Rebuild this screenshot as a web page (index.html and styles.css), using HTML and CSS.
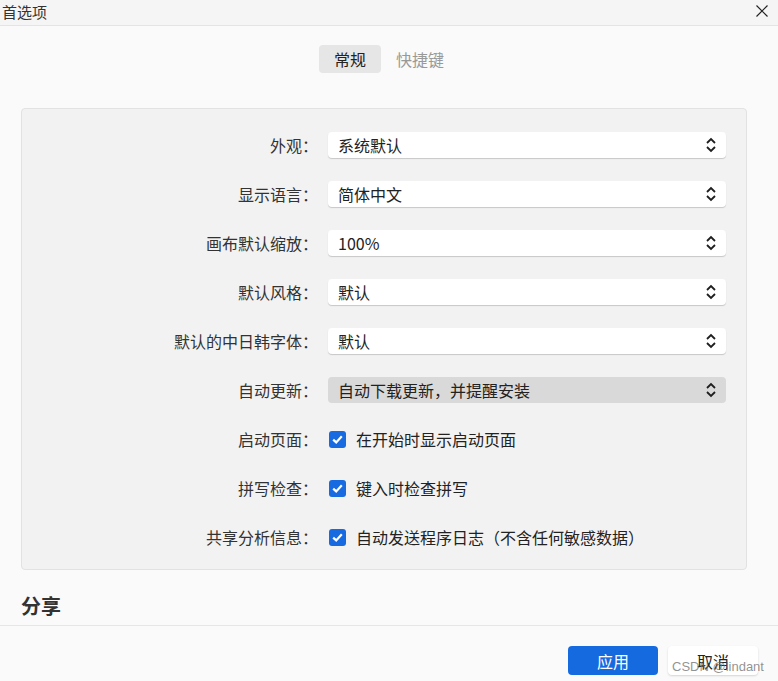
FILE: index.html
```html
<!DOCTYPE html>
<html lang="zh-CN">
<head>
<meta charset="utf-8">
<title>首选项</title>
<link rel="stylesheet" href="styles.css">
</head>
<body>
<div class="window">
  <header class="titlebar">
    <span class="title">首选项</span>
    <button class="close" aria-label="关闭">
      <svg width="12" height="12" viewBox="0 0 12 12"><path d="M0.5 0.5 L11.5 11.5 M11.5 0.5 L0.5 11.5" stroke="#222" stroke-width="1.2" fill="none"/></svg>
    </button>
  </header>

  <main class="content">
    <nav class="tabs">
      <span class="tab active">常规</span>
      <span class="tab">快捷键</span>
    </nav>

    <section class="panel">
      <div class="row">
        <label class="label">外观：</label>
        <div class="select"><span>系统默认</span><svg class="chev" width="10" height="18" viewBox="0 0 10 18"><path d="M1 7 L5 3 L9 7 M1 11 L5 15 L9 11" stroke="#1e1e1e" stroke-width="1.8" fill="none"/></svg></div>
      </div>
      <div class="row">
        <label class="label">显示语言：</label>
        <div class="select"><span>简体中文</span><svg class="chev" width="10" height="18" viewBox="0 0 10 18"><path d="M1 7 L5 3 L9 7 M1 11 L5 15 L9 11" stroke="#1e1e1e" stroke-width="1.8" fill="none"/></svg></div>
      </div>
      <div class="row">
        <label class="label">画布默认缩放：</label>
        <div class="select"><span>100%</span><svg class="chev" width="10" height="18" viewBox="0 0 10 18"><path d="M1 7 L5 3 L9 7 M1 11 L5 15 L9 11" stroke="#1e1e1e" stroke-width="1.8" fill="none"/></svg></div>
      </div>
      <div class="row">
        <label class="label">默认风格：</label>
        <div class="select"><span>默认</span><svg class="chev" width="10" height="18" viewBox="0 0 10 18"><path d="M1 7 L5 3 L9 7 M1 11 L5 15 L9 11" stroke="#1e1e1e" stroke-width="1.8" fill="none"/></svg></div>
      </div>
      <div class="row">
        <label class="label">默认的中日韩字体：</label>
        <div class="select"><span>默认</span><svg class="chev" width="10" height="18" viewBox="0 0 10 18"><path d="M1 7 L5 3 L9 7 M1 11 L5 15 L9 11" stroke="#1e1e1e" stroke-width="1.8" fill="none"/></svg></div>
      </div>
      <div class="row">
        <label class="label">自动更新：</label>
        <div class="select hover"><span>自动下载更新，并提醒安装</span><svg class="chev" width="10" height="18" viewBox="0 0 10 18"><path d="M1 7 L5 3 L9 7 M1 11 L5 15 L9 11" stroke="#1e1e1e" stroke-width="1.8" fill="none"/></svg></div>
      </div>
      <div class="row">
        <label class="label">启动页面：</label>
        <div class="check"><span class="box"><svg width="11" height="9" viewBox="0 0 11 9"><path d="M1.2 4.6 L4.2 7.4 L9.8 1.3" stroke="#fff" stroke-width="2.2" fill="none"/></svg></span><span>在开始时显示启动页面</span></div>
      </div>
      <div class="row">
        <label class="label">拼写检查：</label>
        <div class="check"><span class="box"><svg width="11" height="9" viewBox="0 0 11 9"><path d="M1.2 4.6 L4.2 7.4 L9.8 1.3" stroke="#fff" stroke-width="2.2" fill="none"/></svg></span><span>键入时检查拼写</span></div>
      </div>
      <div class="row">
        <label class="label">共享分析信息：</label>
        <div class="check"><span class="box"><svg width="11" height="9" viewBox="0 0 11 9"><path d="M1.2 4.6 L4.2 7.4 L9.8 1.3" stroke="#fff" stroke-width="2.2" fill="none"/></svg></span><span>自动发送程序日志（不含任何敏感数据）</span></div>
      </div>
    </section>

    <h2 class="section-title">分享</h2>
  </main>

  <footer class="footer">
    <button class="btn primary">应用</button>
    <button class="btn">取消</button>
    <span class="watermark">CSDN @lindant</span>
  </footer>
</div>
</body>
</html>
```
FILE: styles.css
```css
* { box-sizing: border-box; }
html, body {
  margin: 0;
  padding: 0;
  background: #fafafa;
  font-family: "Noto Sans CJK SC", "Noto Sans", sans-serif;
  color: #333;
  font-size: 16px;
}
.window {
  width: 778px;
  height: 681px;
  overflow: hidden;
  position: relative;
  display: flex;
  flex-direction: column;
}
.titlebar {
  height: 26px;
  background: #f5f5f5;
  border-bottom: 1px solid #e4e4e4;
  display: flex;
  align-items: center;
  justify-content: space-between;
  padding: 0 10px 1px 2px;
}
.title {
  font-size: 15px;
  line-height: 20px;
  color: #333;
}
.close {
  border: 0;
  background: none;
  padding: 0;
  width: 12px;
  height: 12px;
  display: flex;
  margin-top: -2px;
}
.content {
  padding: 0 31px 0 21px;
  display: flex;
  flex-direction: column;
}
.tabs {
  display: flex;
  justify-content: center;
  margin: 19px 0 35px 10px;
}
.tab {
  height: 28px;
  line-height: 28px;
  padding: 0 15px;
  font-size: 16px;
  color: #999;
  border-radius: 4px;
}
.tab.active {
  background: #e6e6e6;
  color: #222;
}
.panel {
  background: #f2f2f2;
  border: 1px solid #e2e2e2;
  border-radius: 4px;
  padding: 23px 20px 19px 0;
  display: flex;
  flex-direction: column;
  gap: 23px;
}
.row {
  display: grid;
  grid-template-columns: 296px 1fr;
  column-gap: 10px;
  align-items: center;
  height: 26px;
}
.label {
  text-align: right;
  font-size: 16px;
  line-height: 22px;
  color: #333;
}
.select {
  height: 26px;
  background: #fff;
  border-radius: 4px;
  box-shadow: 0 1px 1px rgba(0, 0, 0, 0.18);
  display: flex;
  align-items: center;
  justify-content: space-between;
  padding: 0 10px 0 10px;
  font-size: 16px;
  line-height: 22px;
  color: #222;
}
.select.hover {
  background: #d9d9d9;
  box-shadow: none;
}
.chev { display: block; }
.check {
  display: flex;
  align-items: center;
  gap: 10px;
  padding-left: 1px;
  font-size: 16px;
  line-height: 22px;
  color: #222;
}
.box {
  width: 17px;
  height: 17px;
  border-radius: 3px;
  background: #176ae0;
  display: flex;
  align-items: center;
  justify-content: center;
  flex: none;
}
.box svg { display: block; }
.section-title {
  margin: 22px 0 0;
  font-size: 20px;
  line-height: 28px;
  font-weight: 700;
  color: #333;
}
.footer {
  margin-top: 5px;
  border-top: 1px solid #e6e6e6;
  display: flex;
  justify-content: flex-end;
  gap: 10px;
  padding: 20px 20px 0 0;
  position: relative;
}
.btn {
  width: 90px;
  height: 29px;
  border: 0;
  border-radius: 4px;
  background: #fff;
  box-shadow: 0 1px 2px rgba(0, 0, 0, 0.15);
  font-family: "Noto Sans CJK SC", sans-serif;
  font-size: 16px;
  color: #222;
  padding: 0;
}
.btn.primary {
  background: #156ae0;
  color: #fff;
  box-shadow: none;
}
.watermark {
  position: absolute;
  left: 672px;
  top: 33px;
  font-family: "Liberation Sans", sans-serif;
  font-size: 13px;
  color: rgba(110, 110, 110, 0.75);
  pointer-events: none;
}
```
